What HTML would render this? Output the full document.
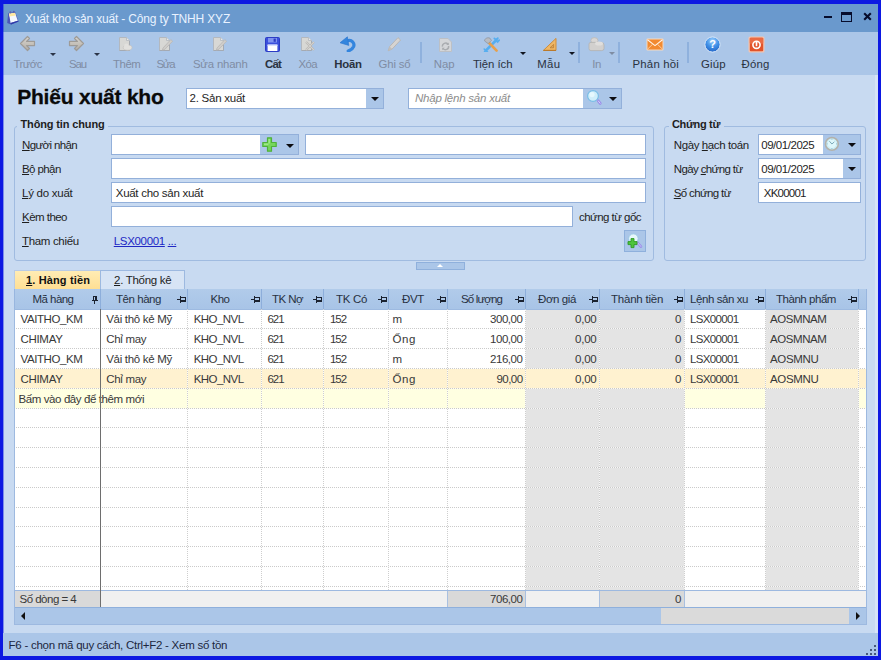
<!DOCTYPE html>
<html><head><meta charset="utf-8"><title>Xuất kho sản xuất</title>
<style>
*{box-sizing:border-box;margin:0;padding:0}
html,body{width:881px;height:660px;overflow:hidden;background:#0c18e2;font-family:"Liberation Sans",sans-serif;font-size:11px;color:#1e1e1e}
.a{position:absolute;white-space:nowrap}
.win{left:3px;top:4px;width:875px;height:652px;background:#c8daf1}
.title{left:3px;top:4px;width:875px;height:28px;background:#6a99cd}
.tb{left:3px;top:32px;width:875px;height:43px;background:#abc6e8}
.tl{font-size:11.5px;color:#7f8ca3;line-height:14px}
.tl.on{color:#2a3240}
.tl.b{font-weight:700;color:#2a3240}
.sep{width:2px;height:21px;top:42px;background:#8fb1dd}
.inp{background:#fff;border:1px solid #93b0da;height:21px}
.btnbg{background:#abc6e8}
.lbl{font-size:11px;line-height:13px;color:#1e1e1e}
u{text-decoration:underline;text-underline-offset:1px}
.gb{border:1px solid #a0bbe0;border-radius:3px}
.leg{font-weight:700;font-size:11px;line-height:13px;background:#c8daf1;padding:0 3px 0 3px;color:#1e1e1e}
.hd{top:290px;height:19px;background:#abc6e8;border-right:1px solid #8fb0dc;font-size:11px;line-height:18px;color:#1e1e1e;text-align:center}
.cell{height:20px;font-size:11px;line-height:19px;color:#1e1e1e;padding:0 5px;overflow:hidden}
.r{text-align:right}
.arr{width:0;height:0;border-left:4px solid transparent;border-right:4px solid transparent;border-top:4px solid #111}
</style></head><body>

<div class="a win"></div>
<div class="a title"></div>
<div class="a" style="left:25px;top:12px;font-size:12px;line-height:14px;color:#e9f2ff;letter-spacing:-0.17px">Xuất kho sản xuất - Công ty TNHH XYZ</div>
<div class="a tb"></div>
<div class="a" style="left:875px;top:75px;width:3px;height:558px;background:#d6e3f6"></div>
<div class="a" style="left:3px;top:4px;width:1px;height:652px;background:rgba(12,24,226,0.4)"></div>
<div class="a tl " style="left:-22.3px;width:100px;text-align:center;top:57px;font-size:11.4px;letter-spacing:-0.59px">Trước</div>
<div class="a tl " style="left:27.5px;width:100px;text-align:center;top:57px;font-size:11.4px;letter-spacing:-1.03px">Sau</div>
<div class="a tl " style="left:76.7px;width:100px;text-align:center;top:57px;font-size:11.4px;letter-spacing:-0.44px">Thêm</div>
<div class="a tl " style="left:115.4px;width:100px;text-align:center;top:57px;font-size:11.4px;letter-spacing:-1.23px">Sửa</div>
<div class="a tl " style="left:170.3px;width:100px;text-align:center;top:57px;font-size:11.4px;letter-spacing:-0.19px">Sửa nhanh</div>
<div class="a tl b" style="left:223.0px;width:100px;text-align:center;top:57px;font-size:11.4px;letter-spacing:-0.79px">Cất</div>
<div class="a tl " style="left:257.8px;width:100px;text-align:center;top:57px;font-size:11.4px;letter-spacing:-0.50px">Xóa</div>
<div class="a tl b" style="left:298.0px;width:100px;text-align:center;top:57px;font-size:11.4px;letter-spacing:-0.22px">Hoãn</div>
<div class="a tl " style="left:344.5px;width:100px;text-align:center;top:57px;font-size:11.4px;letter-spacing:-0.19px">Ghi sổ</div>
<div class="a tl " style="left:394.2px;width:100px;text-align:center;top:57px;font-size:11.4px;letter-spacing:-0.04px">Nạp</div>
<div class="a tl on" style="left:442.7px;width:100px;text-align:center;top:57px;font-size:11.4px;letter-spacing:-0.07px">Tiện ích</div>
<div class="a tl on" style="left:498.8px;width:100px;text-align:center;top:57px;font-size:11.4px;letter-spacing:0.24px">Mẫu</div>
<div class="a tl " style="left:546.7px;width:100px;text-align:center;top:57px;font-size:11.4px;letter-spacing:-0.21px">In</div>
<div class="a tl on" style="left:605.8px;width:100px;text-align:center;top:57px;font-size:11.4px;letter-spacing:0.19px">Phản hồi</div>
<div class="a tl on" style="left:663.4px;width:100px;text-align:center;top:57px;font-size:11.4px;letter-spacing:0.18px">Giúp</div>
<div class="a tl on" style="left:705.6px;width:100px;text-align:center;top:57px;font-size:11.4px;letter-spacing:0.19px">Đóng</div>
<div class="a sep" style="left:420px"></div>
<div class="a sep" style="left:578px"></div>
<div class="a sep" style="left:618px"></div>
<div class="a sep" style="left:687px"></div>
<div class="a" style="left:17.2px;top:84px;font-size:21px;font-weight:700;line-height:26px;color:#0a0a0a;letter-spacing:-0.21px;-webkit-text-stroke:0.3px #0a0a0a">Phiếu xuất kho</div>
<div class="a inp" style="left:186px;top:88px;width:198px;height:21px"></div>
<div class="a btnbg" style="left:366px;top:89px;width:17px;height:19px"></div>
<svg class="a" style="left:370.5px;top:97px" width="8" height="4" viewBox="0 0 8 4"><path d="M0 0H8L4 4Z" fill="#0c0c10"/></svg>
<div class="a lbl" style="left:189.5px;top:92px;font-size:11.5px;letter-spacing:-0.24px;">2. Sản xuất</div>
<div class="a inp" style="left:408px;top:88px;width:214px;height:21px"></div>
<div class="a btnbg" style="left:583px;top:89px;width:38px;height:19px"></div>
<svg class="a" style="left:608.5px;top:97px" width="8" height="4" viewBox="0 0 8 4"><path d="M0 0H8L4 4Z" fill="#0c0c10"/></svg>
<div class="a lbl" style="left:415px;top:92px;font-size:11.5px;letter-spacing:-0.23px;font-style:italic;color:#8c8c8c;">Nhập lệnh sản xuất</div>
<div class="a gb" style="left:14px;top:126px;width:640px;height:135px"></div>
<div class="a" style="left:17px;top:118px;width:91px;height:14px;background:#c8daf1"></div>
<div class="a lbl" style="left:20.5px;top:118px;font-size:11px;letter-spacing:-0.14px;font-weight:700;">Thông tin chung</div>
<div class="a lbl" style="left:22px;top:139px;font-size:11.5px;letter-spacing:-0.63px;"><u>N</u>gười nhận</div>
<div class="a lbl" style="left:22px;top:163px;font-size:11.5px;letter-spacing:-0.59px;"><u>B</u>ộ phận</div>
<div class="a lbl" style="left:22px;top:187px;font-size:11.5px;letter-spacing:-0.26px;"><u>L</u>ý do xuất</div>
<div class="a lbl" style="left:22px;top:211px;font-size:11.5px;letter-spacing:-0.53px;"><u>K</u>èm theo</div>
<div class="a lbl" style="left:22px;top:235px;font-size:11.5px;letter-spacing:-0.33px;"><u>T</u>ham chiếu</div>
<div class="a inp" style="left:111px;top:134px;width:188px;height:21px"></div>
<div class="a btnbg" style="left:260px;top:135px;width:38px;height:19px"></div>
<svg class="a" style="left:286px;top:143.5px" width="8" height="4" viewBox="0 0 8 4"><path d="M0 0H8L4 4Z" fill="#0c0c10"/></svg>
<div class="a inp" style="left:305px;top:134px;width:341px;height:21px"></div>
<div class="a inp" style="left:111px;top:158px;width:535px;height:21px"></div>
<div class="a inp" style="left:111px;top:182px;width:535px;height:21px"></div>
<div class="a lbl" style="left:115.75px;top:187px;font-size:11.5px;letter-spacing:-0.28px;">Xuất cho sản xuất</div>
<div class="a inp" style="left:111px;top:206px;width:462px;height:21px"></div>
<div class="a lbl" style="left:579px;top:211px;font-size:11.5px;letter-spacing:-0.54px;">chứng từ gốc</div>
<div class="a lbl" style="left:113.75px;top:235px;font-size:11.5px;letter-spacing:-0.33px;color:#2027c4;"><u>LSX00001</u> <u>...</u></div>
<div class="a btnbg" style="left:624px;top:230px;width:22px;height:22px;border:1px solid #8fb0dc"></div>
<div class="a gb" style="left:664px;top:126px;width:202px;height:135px"></div>
<div class="a" style="left:669px;top:118px;width:55px;height:14px;background:#c8daf1"></div>
<div class="a lbl" style="left:672px;top:118px;font-size:11px;letter-spacing:-0.34px;font-weight:700;">Chứng từ</div>
<div class="a lbl" style="left:673.75px;top:139px;font-size:11.5px;letter-spacing:-0.40px;">Ngày <u>h</u>ạch toán</div>
<div class="a lbl" style="left:673.75px;top:163px;font-size:11.5px;letter-spacing:-0.62px;">Ngày <u>c</u>hứng từ</div>
<div class="a lbl" style="left:673.75px;top:187px;font-size:11.5px;letter-spacing:-0.64px;"><u>S</u>ố chứng từ</div>
<div class="a inp" style="left:758px;top:134px;width:103px;height:21px"></div>
<div class="a btnbg" style="left:823px;top:135px;width:37px;height:19px"></div>
<svg class="a" style="left:848px;top:143px" width="8" height="4" viewBox="0 0 8 4"><path d="M0 0H8L4 4Z" fill="#0c0c10"/></svg>
<div class="a lbl" style="left:761.25px;top:139px;font-size:11.5px;letter-spacing:-0.46px;">09/01/2025</div>
<div class="a inp" style="left:758px;top:158px;width:103px;height:21px"></div>
<div class="a btnbg" style="left:843px;top:159px;width:17px;height:19px"></div>
<svg class="a" style="left:848px;top:167px" width="8" height="4" viewBox="0 0 8 4"><path d="M0 0H8L4 4Z" fill="#0c0c10"/></svg>
<div class="a lbl" style="left:761.25px;top:163px;font-size:11.5px;letter-spacing:-0.46px;">09/01/2025</div>
<div class="a inp" style="left:758px;top:182px;width:103px;height:21px"></div>
<div class="a lbl" style="left:763.75px;top:187px;font-size:11.5px;letter-spacing:-0.76px;">XK00001</div>
<div class="a" style="left:416px;top:262px;width:49px;height:8px;background:#abc6e8;border:1px solid #8fb0dc"></div>
<div class="a" style="left:437px;top:264px;width:0;height:0;border-left:3px solid transparent;border-right:3px solid transparent;border-bottom:3px solid #fff"></div>
<div class="a" style="left:14px;top:270px;width:87px;height:20px;background:linear-gradient(#ffecb4,#ffde92);border:1px solid #b9cbe6;border-bottom:none"></div>
<div class="a lbl" style="left:26px;top:274px;font-size:11px;letter-spacing:0.14px;font-weight:700;color:#111;"><u>1</u>. Hàng tiền</div>
<div class="a" style="left:100px;top:270px;width:85px;height:20px;background:#d7e4f5;border:1px solid #9db9e0;border-bottom:none"></div>
<div class="a lbl" style="left:114px;top:274px;font-size:11.5px;letter-spacing:-0.28px;"><u>2</u>. Thống kê</div>
<div class="a" style="left:14px;top:289px;width:853px;height:336px;background:#fff"></div>
<div class="a" style="left:525px;top:309px;width:75px;height:281px;background:#e4e4e4"></div>
<div class="a" style="left:599px;top:309px;width:86px;height:281px;background:#e4e4e4"></div>
<div class="a" style="left:765px;top:309px;width:94px;height:281px;background:#e4e4e4"></div>
<div class="a" style="left:14px;top:369px;width:853px;height:20px;background:#fff2d0"></div>
<div class="a" style="left:14px;top:389px;width:853px;height:20px;background:#ffffe1"></div>
<div class="a" style="left:525px;top:389px;width:75px;height:20px;background:#e4e4e4"></div>
<div class="a" style="left:599px;top:389px;width:86px;height:20px;background:#e4e4e4"></div>
<div class="a" style="left:765px;top:389px;width:94px;height:20px;background:#e4e4e4"></div>
<div class="a" style="left:14px;top:289px;width:853px;height:21px;background:linear-gradient(#b1cbea,#a8c4e7);border-bottom:1px solid #9dbae1"></div>
<div class="a" style="left:100px;top:289px;width:1px;height:20px;background:#8daedb"></div>
<div class="a" style="left:187px;top:289px;width:1px;height:20px;background:#8daedb"></div>
<div class="a" style="left:261px;top:289px;width:1px;height:20px;background:#8daedb"></div>
<div class="a" style="left:323px;top:289px;width:1px;height:20px;background:#8daedb"></div>
<div class="a" style="left:388px;top:289px;width:1px;height:20px;background:#8daedb"></div>
<div class="a" style="left:447px;top:289px;width:1px;height:20px;background:#8daedb"></div>
<div class="a" style="left:525px;top:289px;width:1px;height:20px;background:#8daedb"></div>
<div class="a" style="left:599px;top:289px;width:1px;height:20px;background:#8daedb"></div>
<div class="a" style="left:684px;top:289px;width:1px;height:20px;background:#8daedb"></div>
<div class="a" style="left:765px;top:289px;width:1px;height:20px;background:#8daedb"></div>
<div class="a" style="left:858px;top:289px;width:1px;height:20px;background:#8daedb"></div>
<div class="a" style="left:14px;top:289px;width:1px;height:20px;background:#98b6df"></div>
<div class="a" style="left:866px;top:289px;width:1px;height:20px;background:#98b6df"></div>
<div class="a lbl" style="left:32.5px;top:293px;font-size:11.5px;letter-spacing:-0.54px;color:#283142;">Mã hàng</div>
<div class="a lbl" style="left:116px;top:293px;font-size:11.5px;letter-spacing:-0.45px;color:#283142;">Tên hàng</div>
<div class="a lbl" style="left:210.5px;top:293px;font-size:11.5px;letter-spacing:-0.49px;color:#283142;">Kho</div>
<div class="a lbl" style="left:272px;top:293px;font-size:11.5px;letter-spacing:-0.55px;color:#283142;">TK Nợ</div>
<div class="a lbl" style="left:336px;top:293px;font-size:11.5px;letter-spacing:-0.32px;color:#283142;">TK Có</div>
<div class="a lbl" style="left:402px;top:293px;font-size:11.5px;letter-spacing:-0.33px;color:#283142;">ĐVT</div>
<div class="a lbl" style="left:461px;top:293px;font-size:11.5px;letter-spacing:-0.86px;color:#283142;">Số lượng</div>
<div class="a lbl" style="left:538px;top:293px;font-size:11.5px;letter-spacing:-0.40px;color:#283142;">Đơn giá</div>
<div class="a lbl" style="left:611px;top:293px;font-size:11.5px;letter-spacing:-0.23px;color:#283142;">Thành tiền</div>
<div class="a lbl" style="left:690px;top:293px;font-size:11.5px;letter-spacing:-0.42px;color:#283142;">Lệnh sản xu</div>
<div class="a lbl" style="left:776px;top:293px;font-size:11.5px;letter-spacing:-0.46px;color:#283142;">Thành phẩm</div>
<svg class="a" style="left:92px;top:296px" width="6" height="8" viewBox="0 0 6 8" shape-rendering="crispEdges"><rect x="1" y="0" width="4" height="1" fill="#1b2230"/><rect x="1" y="0" width="1" height="5" fill="#1b2230"/><rect x="3" y="0" width="2" height="5" fill="#1b2230"/><rect x="0" y="4" width="6" height="1" fill="#1b2230"/><rect x="2" y="5" width="1" height="3" fill="#1b2230"/></svg>
<svg class="a" style="left:177px;top:296px" width="9" height="7" viewBox="0 0 9 7" shape-rendering="crispEdges"><rect x="0" y="3" width="3" height="1" fill="#1b2230"/><rect x="3" y="0" width="1" height="7" fill="#1b2230"/><rect x="4" y="1" width="5" height="1" fill="#1b2230"/><rect x="4" y="4" width="5" height="2" fill="#1b2230"/><rect x="8" y="1" width="1" height="5" fill="#1b2230"/></svg>
<svg class="a" style="left:251px;top:296px" width="9" height="7" viewBox="0 0 9 7" shape-rendering="crispEdges"><rect x="0" y="3" width="3" height="1" fill="#1b2230"/><rect x="3" y="0" width="1" height="7" fill="#1b2230"/><rect x="4" y="1" width="5" height="1" fill="#1b2230"/><rect x="4" y="4" width="5" height="2" fill="#1b2230"/><rect x="8" y="1" width="1" height="5" fill="#1b2230"/></svg>
<svg class="a" style="left:313px;top:296px" width="9" height="7" viewBox="0 0 9 7" shape-rendering="crispEdges"><rect x="0" y="3" width="3" height="1" fill="#1b2230"/><rect x="3" y="0" width="1" height="7" fill="#1b2230"/><rect x="4" y="1" width="5" height="1" fill="#1b2230"/><rect x="4" y="4" width="5" height="2" fill="#1b2230"/><rect x="8" y="1" width="1" height="5" fill="#1b2230"/></svg>
<svg class="a" style="left:378px;top:296px" width="9" height="7" viewBox="0 0 9 7" shape-rendering="crispEdges"><rect x="0" y="3" width="3" height="1" fill="#1b2230"/><rect x="3" y="0" width="1" height="7" fill="#1b2230"/><rect x="4" y="1" width="5" height="1" fill="#1b2230"/><rect x="4" y="4" width="5" height="2" fill="#1b2230"/><rect x="8" y="1" width="1" height="5" fill="#1b2230"/></svg>
<svg class="a" style="left:437px;top:296px" width="9" height="7" viewBox="0 0 9 7" shape-rendering="crispEdges"><rect x="0" y="3" width="3" height="1" fill="#1b2230"/><rect x="3" y="0" width="1" height="7" fill="#1b2230"/><rect x="4" y="1" width="5" height="1" fill="#1b2230"/><rect x="4" y="4" width="5" height="2" fill="#1b2230"/><rect x="8" y="1" width="1" height="5" fill="#1b2230"/></svg>
<svg class="a" style="left:515px;top:296px" width="9" height="7" viewBox="0 0 9 7" shape-rendering="crispEdges"><rect x="0" y="3" width="3" height="1" fill="#1b2230"/><rect x="3" y="0" width="1" height="7" fill="#1b2230"/><rect x="4" y="1" width="5" height="1" fill="#1b2230"/><rect x="4" y="4" width="5" height="2" fill="#1b2230"/><rect x="8" y="1" width="1" height="5" fill="#1b2230"/></svg>
<svg class="a" style="left:589px;top:296px" width="9" height="7" viewBox="0 0 9 7" shape-rendering="crispEdges"><rect x="0" y="3" width="3" height="1" fill="#1b2230"/><rect x="3" y="0" width="1" height="7" fill="#1b2230"/><rect x="4" y="1" width="5" height="1" fill="#1b2230"/><rect x="4" y="4" width="5" height="2" fill="#1b2230"/><rect x="8" y="1" width="1" height="5" fill="#1b2230"/></svg>
<svg class="a" style="left:674px;top:296px" width="9" height="7" viewBox="0 0 9 7" shape-rendering="crispEdges"><rect x="0" y="3" width="3" height="1" fill="#1b2230"/><rect x="3" y="0" width="1" height="7" fill="#1b2230"/><rect x="4" y="1" width="5" height="1" fill="#1b2230"/><rect x="4" y="4" width="5" height="2" fill="#1b2230"/><rect x="8" y="1" width="1" height="5" fill="#1b2230"/></svg>
<svg class="a" style="left:755px;top:296px" width="9" height="7" viewBox="0 0 9 7" shape-rendering="crispEdges"><rect x="0" y="3" width="3" height="1" fill="#1b2230"/><rect x="3" y="0" width="1" height="7" fill="#1b2230"/><rect x="4" y="1" width="5" height="1" fill="#1b2230"/><rect x="4" y="4" width="5" height="2" fill="#1b2230"/><rect x="8" y="1" width="1" height="5" fill="#1b2230"/></svg>
<svg class="a" style="left:848px;top:296px" width="9" height="7" viewBox="0 0 9 7" shape-rendering="crispEdges"><rect x="0" y="3" width="3" height="1" fill="#1b2230"/><rect x="3" y="0" width="1" height="7" fill="#1b2230"/><rect x="4" y="1" width="5" height="1" fill="#1b2230"/><rect x="4" y="4" width="5" height="2" fill="#1b2230"/><rect x="8" y="1" width="1" height="5" fill="#1b2230"/></svg>
<div class="a" style="left:14px;top:328px;width:853px;height:1px;background:repeating-linear-gradient(90deg,#cacaca 0 1px,rgba(255,255,255,.75) 1px 2px)"></div>
<div class="a" style="left:14px;top:348px;width:853px;height:1px;background:repeating-linear-gradient(90deg,#cacaca 0 1px,rgba(255,255,255,.75) 1px 2px)"></div>
<div class="a" style="left:14px;top:368px;width:853px;height:1px;background:repeating-linear-gradient(90deg,#cacaca 0 1px,rgba(255,255,255,.75) 1px 2px)"></div>
<div class="a" style="left:14px;top:388px;width:853px;height:1px;background:repeating-linear-gradient(90deg,#cacaca 0 1px,rgba(255,255,255,.75) 1px 2px)"></div>
<div class="a" style="left:14px;top:408px;width:853px;height:1px;background:repeating-linear-gradient(90deg,#cacaca 0 1px,rgba(255,255,255,.75) 1px 2px)"></div>
<div class="a" style="left:14px;top:427px;width:853px;height:1px;background:repeating-linear-gradient(90deg,#cacaca 0 1px,rgba(255,255,255,.75) 1px 2px)"></div>
<div class="a" style="left:14px;top:447px;width:853px;height:1px;background:repeating-linear-gradient(90deg,#cacaca 0 1px,rgba(255,255,255,.75) 1px 2px)"></div>
<div class="a" style="left:14px;top:467px;width:853px;height:1px;background:repeating-linear-gradient(90deg,#cacaca 0 1px,rgba(255,255,255,.75) 1px 2px)"></div>
<div class="a" style="left:14px;top:487px;width:853px;height:1px;background:repeating-linear-gradient(90deg,#cacaca 0 1px,rgba(255,255,255,.75) 1px 2px)"></div>
<div class="a" style="left:14px;top:507px;width:853px;height:1px;background:repeating-linear-gradient(90deg,#cacaca 0 1px,rgba(255,255,255,.75) 1px 2px)"></div>
<div class="a" style="left:14px;top:526px;width:853px;height:1px;background:repeating-linear-gradient(90deg,#cacaca 0 1px,rgba(255,255,255,.75) 1px 2px)"></div>
<div class="a" style="left:14px;top:546px;width:853px;height:1px;background:repeating-linear-gradient(90deg,#cacaca 0 1px,rgba(255,255,255,.75) 1px 2px)"></div>
<div class="a" style="left:14px;top:566px;width:853px;height:1px;background:repeating-linear-gradient(90deg,#cacaca 0 1px,rgba(255,255,255,.75) 1px 2px)"></div>
<div class="a" style="left:14px;top:586px;width:853px;height:1px;background:repeating-linear-gradient(90deg,#cacaca 0 1px,rgba(255,255,255,.75) 1px 2px)"></div>
<div class="a" style="left:187px;top:309px;width:1px;height:281px;background:repeating-linear-gradient(180deg,#cecece 0 1px,rgba(255,255,255,.75) 1px 2px)"></div>
<div class="a" style="left:261px;top:309px;width:1px;height:281px;background:repeating-linear-gradient(180deg,#cecece 0 1px,rgba(255,255,255,.75) 1px 2px)"></div>
<div class="a" style="left:323px;top:309px;width:1px;height:281px;background:repeating-linear-gradient(180deg,#cecece 0 1px,rgba(255,255,255,.75) 1px 2px)"></div>
<div class="a" style="left:388px;top:309px;width:1px;height:281px;background:repeating-linear-gradient(180deg,#cecece 0 1px,rgba(255,255,255,.75) 1px 2px)"></div>
<div class="a" style="left:447px;top:309px;width:1px;height:281px;background:repeating-linear-gradient(180deg,#cecece 0 1px,rgba(255,255,255,.75) 1px 2px)"></div>
<div class="a" style="left:525px;top:309px;width:1px;height:281px;background:repeating-linear-gradient(180deg,#cecece 0 1px,rgba(255,255,255,.75) 1px 2px)"></div>
<div class="a" style="left:599px;top:309px;width:1px;height:281px;background:repeating-linear-gradient(180deg,#cecece 0 1px,rgba(255,255,255,.75) 1px 2px)"></div>
<div class="a" style="left:684px;top:309px;width:1px;height:281px;background:repeating-linear-gradient(180deg,#cecece 0 1px,rgba(255,255,255,.75) 1px 2px)"></div>
<div class="a" style="left:765px;top:309px;width:1px;height:281px;background:repeating-linear-gradient(180deg,#cecece 0 1px,rgba(255,255,255,.75) 1px 2px)"></div>
<div class="a" style="left:858px;top:309px;width:1px;height:281px;background:repeating-linear-gradient(180deg,#cecece 0 1px,rgba(255,255,255,.75) 1px 2px)"></div>
<div class="a lbl" style="left:20.5px;top:313px;font-size:11.5px;letter-spacing:-0.40px;color:#383838;">VAITHO_KM</div>
<div class="a lbl" style="left:106.25px;top:313px;font-size:11.5px;letter-spacing:-0.30px;color:#383838;">Vải thô kẻ Mỹ</div>
<div class="a lbl" style="left:193.75px;top:313px;font-size:11.5px;letter-spacing:-0.56px;color:#383838;">KHO_NVL</div>
<div class="a lbl" style="left:267.5px;top:313px;font-size:11.5px;letter-spacing:-1.06px;color:#383838;">621</div>
<div class="a lbl" style="left:330px;top:313px;font-size:11.5px;letter-spacing:-1.06px;color:#383838;">152</div>
<div class="a lbl" style="left:392.5px;top:313px;font-size:11.5px;letter-spacing:-1.58px;color:#383838;">m</div>
<div class="a lbl" style="left:490px;top:313px;font-size:11.5px;letter-spacing:-0.45px;color:#383838;">300,00</div>
<div class="a lbl" style="left:575px;top:313px;font-size:11.5px;letter-spacing:-0.22px;color:#383838;">0,00</div>
<div class="a lbl" style="left:675px;top:313px;font-size:11.5px;letter-spacing:-0.40px;color:#383838;">0</div>
<div class="a lbl" style="left:690px;top:313px;font-size:11.5px;letter-spacing:-0.65px;color:#383838;">LSX00001</div>
<div class="a lbl" style="left:770px;top:313px;font-size:11.5px;letter-spacing:-0.42px;color:#383838;">AOSMNAM</div>
<div class="a lbl" style="left:20.5px;top:333px;font-size:11.5px;letter-spacing:-0.31px;color:#383838;">CHIMAY</div>
<div class="a lbl" style="left:106.25px;top:333px;font-size:11.5px;letter-spacing:-0.31px;color:#383838;">Chỉ may</div>
<div class="a lbl" style="left:193.75px;top:333px;font-size:11.5px;letter-spacing:-0.56px;color:#383838;">KHO_NVL</div>
<div class="a lbl" style="left:267.5px;top:333px;font-size:11.5px;letter-spacing:-1.06px;color:#383838;">621</div>
<div class="a lbl" style="left:330px;top:333px;font-size:11.5px;letter-spacing:-1.06px;color:#383838;">152</div>
<div class="a lbl" style="left:392.5px;top:333px;font-size:11.5px;letter-spacing:0.59px;color:#383838;">Ống</div>
<div class="a lbl" style="left:490px;top:333px;font-size:11.5px;letter-spacing:-0.45px;color:#383838;">100,00</div>
<div class="a lbl" style="left:575px;top:333px;font-size:11.5px;letter-spacing:-0.22px;color:#383838;">0,00</div>
<div class="a lbl" style="left:675px;top:333px;font-size:11.5px;letter-spacing:-0.40px;color:#383838;">0</div>
<div class="a lbl" style="left:690px;top:333px;font-size:11.5px;letter-spacing:-0.65px;color:#383838;">LSX00001</div>
<div class="a lbl" style="left:770px;top:333px;font-size:11.5px;letter-spacing:-0.42px;color:#383838;">AOSMNAM</div>
<div class="a lbl" style="left:20.5px;top:353px;font-size:11.5px;letter-spacing:-0.40px;color:#383838;">VAITHO_KM</div>
<div class="a lbl" style="left:106.25px;top:353px;font-size:11.5px;letter-spacing:-0.30px;color:#383838;">Vải thô kẻ Mỹ</div>
<div class="a lbl" style="left:193.75px;top:353px;font-size:11.5px;letter-spacing:-0.56px;color:#383838;">KHO_NVL</div>
<div class="a lbl" style="left:267.5px;top:353px;font-size:11.5px;letter-spacing:-1.06px;color:#383838;">621</div>
<div class="a lbl" style="left:330px;top:353px;font-size:11.5px;letter-spacing:-1.06px;color:#383838;">152</div>
<div class="a lbl" style="left:392.5px;top:353px;font-size:11.5px;letter-spacing:-1.58px;color:#383838;">m</div>
<div class="a lbl" style="left:490px;top:353px;font-size:11.5px;letter-spacing:-0.45px;color:#383838;">216,00</div>
<div class="a lbl" style="left:575px;top:353px;font-size:11.5px;letter-spacing:-0.22px;color:#383838;">0,00</div>
<div class="a lbl" style="left:675px;top:353px;font-size:11.5px;letter-spacing:-0.40px;color:#383838;">0</div>
<div class="a lbl" style="left:690px;top:353px;font-size:11.5px;letter-spacing:-0.65px;color:#383838;">LSX00001</div>
<div class="a lbl" style="left:770px;top:353px;font-size:11.5px;letter-spacing:-0.33px;color:#383838;">AOSMNU</div>
<div class="a lbl" style="left:20.5px;top:373px;font-size:11.5px;letter-spacing:-0.31px;color:#383838;">CHIMAY</div>
<div class="a lbl" style="left:106.25px;top:373px;font-size:11.5px;letter-spacing:-0.31px;color:#383838;">Chỉ may</div>
<div class="a lbl" style="left:193.75px;top:373px;font-size:11.5px;letter-spacing:-0.56px;color:#383838;">KHO_NVL</div>
<div class="a lbl" style="left:267.5px;top:373px;font-size:11.5px;letter-spacing:-1.06px;color:#383838;">621</div>
<div class="a lbl" style="left:330px;top:373px;font-size:11.5px;letter-spacing:-1.06px;color:#383838;">152</div>
<div class="a lbl" style="left:392.5px;top:373px;font-size:11.5px;letter-spacing:0.59px;color:#383838;">Ống</div>
<div class="a lbl" style="left:496.5px;top:373px;font-size:11.5px;letter-spacing:-0.56px;color:#383838;">90,00</div>
<div class="a lbl" style="left:575px;top:373px;font-size:11.5px;letter-spacing:-0.22px;color:#383838;">0,00</div>
<div class="a lbl" style="left:675px;top:373px;font-size:11.5px;letter-spacing:-0.40px;color:#383838;">0</div>
<div class="a lbl" style="left:690px;top:373px;font-size:11.5px;letter-spacing:-0.65px;color:#383838;">LSX00001</div>
<div class="a lbl" style="left:770px;top:373px;font-size:11.5px;letter-spacing:-0.33px;color:#383838;">AOSMNU</div>
<div class="a lbl" style="left:18.5px;top:393px;font-size:11.5px;letter-spacing:-0.40px;color:#383838;">Bấm vào đây để thêm mới</div>
<div class="a" style="left:14px;top:590px;width:853px;height:17px;background:#f0f0f0;border-top:1px solid #9db9e0"></div>
<div class="a" style="left:14px;top:591px;width:86px;height:16px;background:#d9d9d9"></div>
<div class="a" style="left:448px;top:591px;width:77px;height:16px;background:#d9d9d9"></div>
<div class="a" style="left:600px;top:591px;width:84px;height:16px;background:#d9d9d9"></div>
<div class="a" style="left:447px;top:591px;width:1px;height:16px;background:#a9c0e0"></div>
<div class="a" style="left:525px;top:591px;width:1px;height:16px;background:#a9c0e0"></div>
<div class="a" style="left:599px;top:591px;width:1px;height:16px;background:#a9c0e0"></div>
<div class="a" style="left:684px;top:591px;width:1px;height:16px;background:#a9c0e0"></div>
<div class="a lbl" style="left:19.5px;top:593px;font-size:11.5px;letter-spacing:-0.51px;color:#383838;">Số dòng = 4</div>
<div class="a lbl" style="left:490px;top:593px;font-size:11.5px;letter-spacing:-0.45px;color:#383838;">706,00</div>
<div class="a lbl" style="left:675px;top:593px;font-size:11.5px;letter-spacing:-0.40px;color:#383838;">0</div>
<div class="a" style="left:100px;top:309px;width:1px;height:298px;background:#6e6e6e"></div>
<div class="a" style="left:14px;top:607px;width:853px;height:18px;background:#abc6e8;border-top:1px solid #8fb0dc;border-bottom:1px solid #8fb0dc"></div>
<div class="a" style="left:661px;top:608px;width:188px;height:16px;background:#dadada"></div>
<div class="a" style="left:21px;top:612px;width:0;height:0;border-top:4px solid transparent;border-bottom:4px solid transparent;border-right:4px solid #111"></div>
<div class="a" style="left:856px;top:612px;width:0;height:0;border-top:4px solid transparent;border-bottom:4px solid transparent;border-left:4px solid #111"></div>
<div class="a" style="left:3px;top:633px;width:875px;height:23px;background:#abc6e8"></div>
<div class="a lbl" style="left:8.6px;top:639px;font-size:11.5px;letter-spacing:-0.26px;color:#1c2740;">F6 - chọn mã quy cách, Ctrl+F2 - Xem số tồn</div>
<div class="a" style="left:14px;top:309px;width:853px;height:316px;border:1px solid #9db9e0;border-top:none;pointer-events:none"></div>
<svg class="a" style="left:6px;top:9.5px" width="14" height="16" viewBox="0 0 14 16" ><path d="M2.2 3.2 L9.2 2 L12.6 11.6 L5 14.4 L1.2 13 Z" fill="#4a55b8"/><path d="M3 3.6 L9 2.8 L11.8 10.8 L4.6 13 Z" fill="#f4f8ff"/><path d="M3 3.6 L9 2.8 L9.8 5.4 L3.4 6.4 Z" fill="#ffe9a0"/><circle cx="4.4" cy="2.4" r="1.1" fill="#5a64b0"/><circle cx="7.8" cy="1.9" r="1.1" fill="#5a64b0"/><path d="M4.6 13 L11.8 10.8 L12.6 11.6 L5 14.4Z" fill="#2f3aa8"/></svg>
<div class="a" style="left:824px;top:16px;width:8px;height:2px;background:#060c2c"></div>
<div class="a" style="left:841px;top:12px;width:11px;height:10px;border:1px solid #060c2c;border-top-width:3px"></div>
<svg class="a" style="left:863px;top:12px" width="9" height="9" viewBox="0 0 9 9" ><path d="M1.2 1.2 L7.8 7.8 M7.8 1.2 L1.2 7.8" stroke="#060c2c" stroke-width="2.1" fill="none"/></svg>
<svg class="a" style="left:19px;top:35px" width="17" height="17" viewBox="0 0 17 17" ><defs><linearGradient id="ga" x1="0" y1="0" x2="0" y2="1"><stop offset="0" stop-color="#d9d6d0"/><stop offset="1" stop-color="#b3aea6"/></linearGradient></defs><path d="M8.5 1.5 L1.5 8.5 L8.5 15.5 L10.5 13.5 L7.6 10.6 L15.5 10.6 L15.5 6.4 L7.6 6.4 L10.5 3.5 Z" fill="url(#ga)" stroke="#9e9b97" stroke-width="1.2" stroke-linejoin="round"/></svg>
<svg class="a" style="left:68px;top:35px" width="17" height="17" viewBox="0 0 17 17" ><path d="M8.5 1.5 L15.5 8.5 L8.5 15.5 L6.5 13.5 L9.4 10.6 L1.5 10.6 L1.5 6.4 L9.4 6.4 L6.5 3.5 Z" fill="url(#ga)" stroke="#9e9b97" stroke-width="1.2" stroke-linejoin="round"/></svg>
<svg class="a" style="left:50px;top:53px" width="6" height="3" viewBox="0 0 6 3" ><path d="M0 0 H6 L3 3Z" fill="#2b3448"/></svg>
<svg class="a" style="left:94px;top:53px" width="6" height="3" viewBox="0 0 6 3" ><path d="M0 0 H6 L3 3Z" fill="#2b3448"/></svg>
<svg class="a" style="left:520px;top:52px" width="6" height="3" viewBox="0 0 6 3" ><path d="M0 0 H6 L3 3Z" fill="#10151f"/></svg>
<svg class="a" style="left:569px;top:52px" width="6" height="3" viewBox="0 0 6 3" ><path d="M0 0 H6 L3 3Z" fill="#10151f"/></svg>
<svg class="a" style="left:609px;top:52px" width="6" height="3" viewBox="0 0 6 3" ><path d="M0 0 H6 L3 3Z" fill="#7f8da3"/></svg>
<svg class="a" style="left:118px;top:37px" width="15" height="15" viewBox="0 0 15 15" ><path d="M1.5 0.5 H8.5 L11.5 3.5 V13.5 H1.5 Z" fill="#d8d8d5" stroke="#b3b8bf" stroke-width="1"/><path d="M1.5 13.5 H11.5 V4" fill="none" stroke="#a4aab3" stroke-width="1"/><path d="M8.5 0.5 V3.5 H11.5" fill="#e8e8e6" stroke="#b3b8bf" stroke-width="0.8"/><ellipse cx="9.6" cy="10.6" rx="4.4" ry="2.6" fill="#e2e1de" stroke="#c2c0bc" stroke-width="0.6"/><circle cx="8.4" cy="8.6" r="2.2" fill="#e2e1de"/></svg>
<svg class="a" style="left:158px;top:37px" width="16" height="15" viewBox="0 0 16 15" ><path d="M1.5 0.5 H8.5 L11.5 3.5 V13.5 H1.5 Z" fill="#d8d8d5" stroke="#b3b8bf" stroke-width="1"/><path d="M1.5 13.5 H11.5 V4" fill="none" stroke="#a4aab3" stroke-width="1"/><path d="M8.5 0.5 V3.5 H11.5" fill="#e8e8e6" stroke="#b3b8bf" stroke-width="0.8"/><path d="M5 11 L12.8 2.6 L14.6 4.2 L6.8 12.4 L4.4 13 Z" fill="#cfcdca" stroke="#b9b7b5" stroke-width="0.8"/></svg>
<svg class="a" style="left:212px;top:37px" width="16" height="15" viewBox="0 0 16 15" ><path d="M1.5 0.5 H8.5 L11.5 3.5 V13.5 H1.5 Z" fill="#d8d8d5" stroke="#b3b8bf" stroke-width="1"/><path d="M1.5 13.5 H11.5 V4" fill="none" stroke="#a4aab3" stroke-width="1"/><path d="M8.5 0.5 V3.5 H11.5" fill="#e8e8e6" stroke="#b3b8bf" stroke-width="0.8"/><path d="M5 11 L12.8 2.6 L14.6 4.2 L6.8 12.4 L4.4 13 Z" fill="#cfcdca" stroke="#b9b7b5" stroke-width="0.8"/></svg>
<svg class="a" style="left:265px;top:37px" width="15" height="15" viewBox="0 0 15 15" ><rect x="0.5" y="0.5" width="14" height="14" rx="1" fill="#3a4fdc" stroke="#2c3cc4"/><rect x="3" y="1" width="9" height="4.5" fill="#7f93f0"/><rect x="8.6" y="1.6" width="2.2" height="3.2" fill="#2c3cc4"/><rect x="2.6" y="7.6" width="9.8" height="6.4" fill="#ffffff"/><rect x="2.6" y="7.6" width="9.8" height="1.4" fill="#d8e0ff"/></svg>
<svg class="a" style="left:300px;top:37px" width="16" height="15" viewBox="0 0 16 15" ><path d="M1.5 0.5 H8.5 L11.5 3.5 V13.5 H1.5 Z" fill="#d8d8d5" stroke="#b3b8bf" stroke-width="1"/><path d="M1.5 13.5 H11.5 V4" fill="none" stroke="#a4aab3" stroke-width="1"/><path d="M8.5 0.5 V3.5 H11.5" fill="#e8e8e6" stroke="#b3b8bf" stroke-width="0.8"/><path d="M6 5 L14 13 M14 5 L6 13" stroke="#bdbbb8" stroke-width="2.2"/><path d="M6 5 L14 13 M14 5 L6 13" stroke="#d2d0cd" stroke-width="1"/></svg>
<svg class="a" style="left:339px;top:36px" width="17" height="16" viewBox="0 0 17 16" ><path d="M8.6 4.8 C12.6 3.4 16 7 14.6 10.6 C13.6 13 11.6 14.2 9.2 15" fill="none" stroke="#3385de" stroke-width="3.2" stroke-linecap="round"/><path d="M1 6.8 L8.4 0.8 L9.8 9.4 Z" fill="#3385de" stroke="#2a74cc" stroke-width="0.6" stroke-linejoin="round"/></svg>
<svg class="a" style="left:386px;top:36px" width="16" height="17" viewBox="0 0 16 17" ><path d="M2.2 14.8 L3.6 10.6 L12 1.6 L14.6 4 L6.2 13 Z" fill="#d6d4d2" stroke="#b5b3b1" stroke-width="0.9" stroke-linejoin="round"/><path d="M2.2 14.8 L3.6 10.6 L6.2 13 Z" fill="#bfbdbb"/></svg>
<svg class="a" style="left:438px;top:38px" width="15" height="14" viewBox="0 0 15 14" ><path d="M1.5 0.5 H10 L13.5 4 V13.5 H1.5 Z" fill="#d4d6d9" stroke="#bcc0c6"/><path d="M4.4 8.6 A3.2 3.2 0 0 1 10 6.2 M10.6 8 A3.2 3.2 0 0 1 5 10.6" stroke="#a9acb0" stroke-width="1.4" fill="none"/><path d="M10.8 4.4 V7 H8.2Z M4.2 12.2 V9.8 H6.8Z" fill="#a9acb0"/></svg>
<svg class="a" style="left:483px;top:36px" width="17" height="16" viewBox="0 0 17 16" ><path d="M3 14.4 L13.4 4" stroke="#55aef0" stroke-width="2.6" stroke-linecap="round"/><path d="M11.4 2.4 L13 4 L14.8 2.2 M12.8 4.2 L14.6 6 L16.2 4.2" stroke="#55aef0" stroke-width="1.8" fill="none" stroke-linecap="round"/><path d="M1.2 13 L2.8 14.6 L1.6 15.6 M3.2 14.8 L4.6 16" stroke="#55aef0" stroke-width="1.6" fill="none" stroke-linecap="round"/><path d="M13.6 14.6 L6.2 7" stroke="#e6a04c" stroke-width="2.6" stroke-linecap="round"/><path d="M1.6 5 C1.4 2.6 4.4 1 7 2.2 L8.4 4.4 L5.2 7.6 Z" fill="#b9bcc2" stroke="#8b9099" stroke-width="0.7" stroke-linejoin="round"/></svg>
<svg class="a" style="left:542px;top:37px" width="17" height="15" viewBox="0 0 17 15" ><path d="M14 1.4 L14 13.4 L1.4 13.4 Z" fill="#efb765" stroke="#cf8d3a" stroke-width="1" stroke-linejoin="round"/><path d="M11.6 7.4 L11.6 10.8 L8 10.8 Z" fill="#d9a560" stroke="#b77a2c" stroke-width="0.7"/><path d="M1.4 13.4 H14" stroke="#b8782a" stroke-width="1"/></svg>
<svg class="a" style="left:588px;top:37px" width="17" height="15" viewBox="0 0 17 15" ><ellipse cx="6.4" cy="3.6" rx="3.6" ry="3" fill="#d9d7d5" stroke="#bab8b6" stroke-width="0.8"/><path d="M1 7 Q1 5.4 3 5.4 H13.6 Q16 5.4 16 8 V11.6 Q16 13.6 13.6 13.6 H3 Q1 13.6 1 11.6 Z" fill="#d2d0ce" stroke="#b4b2b0" stroke-width="0.8"/><ellipse cx="11" cy="6.6" rx="4" ry="2" fill="#e0dedc"/></svg>
<svg class="a" style="left:646px;top:38px" width="18" height="13" viewBox="0 0 18 13" ><rect x="0.5" y="0.5" width="17" height="12" rx="1" fill="#f7d9bd"/><rect x="1.5" y="1.5" width="15" height="10" fill="#f28a30"/><path d="M1.5 1.8 L9 7.6 L16.5 1.8" stroke="#fff3e6" stroke-width="1.1" fill="none"/><path d="M1.5 11.2 L6.6 6.2 M16.5 11.2 L11.4 6.2" stroke="#fbd2ae" stroke-width="0.9"/></svg>
<svg class="a" style="left:704px;top:36px" width="17" height="17" viewBox="0 0 17 17" ><defs><radialGradient id="gq" cx="50%" cy="25%" r="75%"><stop offset="0" stop-color="#9fd2ff"/><stop offset="0.55" stop-color="#3f8fe6"/><stop offset="1" stop-color="#2667c8"/></radialGradient></defs><circle cx="8.5" cy="8.5" r="7.6" fill="url(#gq)" stroke="#d7e6f8" stroke-width="1"/><text x="8.5" y="12.4" text-anchor="middle" font-family="Liberation Sans" font-weight="700" font-size="11" fill="#fff">?</text></svg>
<svg class="a" style="left:748px;top:36px" width="17" height="17" viewBox="0 0 17 17" ><rect x="0.5" y="0.5" width="16" height="16" rx="1.5" fill="#f3c3ae"/><rect x="1.8" y="1.8" width="13.4" height="13.4" rx="1" fill="#e2532a"/><rect x="1.8" y="1.8" width="13.4" height="6" rx="1" fill="#ea6b44"/><circle cx="8.5" cy="8.8" r="3.6" fill="none" stroke="#fff" stroke-width="1.6"/><rect x="7.7" y="5.8" width="1.6" height="4.4" fill="#fff"/></svg>
<svg class="a" style="left:262px;top:137px" width="15" height="15" viewBox="0 0 15 15" ><path d="M5.5 0.8 H9.5 V5.5 H14.2 V9.5 H9.5 V14.2 H5.5 V9.5 H0.8 V5.5 H5.5 Z" fill="#76d65a" stroke="#4fb13a" stroke-width="1.2" stroke-linejoin="round"/><path d="M6.4 2 H8 V6.4 H6.4Z M2 6.4 H6.4 V8 H2Z" fill="#a8ec92" opacity="0.8"/></svg>
<svg class="a" style="left:586px;top:89px" width="18" height="18" viewBox="0 0 18 18" ><circle cx="7" cy="7" r="5.4" fill="#cfeefa" stroke="#79bde6" stroke-width="1.2"/><circle cx="6" cy="5.6" r="2.6" fill="#eafaff" opacity="0.8"/><path d="M12.2 11.8 L14.2 14.4" stroke="#9a8fe8" stroke-width="2.8" stroke-linecap="round"/><path d="M12.3 12 L14.1 14.2" stroke="#d5cffa" stroke-width="1" stroke-linecap="round"/></svg>
<svg class="a" style="left:824px;top:136px" width="16" height="16" viewBox="0 0 16 16" ><circle cx="7.9" cy="7.9" r="6.4" fill="#cdeef6" stroke="#b3b1aa" stroke-width="1.6"/><circle cx="7.9" cy="7.9" r="4.2" fill="#dff7fb"/><path d="M7.9 8 L5.4 5.2 M7.9 8 L10.4 5.8" stroke="#6f9fb0" stroke-width="0.9"/><path d="M7.9 2.6v1M7.9 12.2v1M2.6 7.9h1M12.2 7.9h1" stroke="#7fb0c0" stroke-width="0.8"/></svg>
<svg class="a" style="left:626px;top:232px" width="18" height="18" viewBox="0 0 18 18" ><circle cx="7.4" cy="6.6" r="4.8" fill="#e6f7fb" stroke="#9cc8e6" stroke-width="1"/><path d="M11.4 10.6 L15 14.6" stroke="#9a8fe8" stroke-width="2.6" stroke-linecap="round"/><path d="M11.6 10.8 L14.8 14.4" stroke="#d5cffa" stroke-width="0.9" stroke-linecap="round"/><path d="M5 6.6 H8 V9.6 H11 V12.6 H8 V15.6 H5 V12.6 H2 V9.6 H5 Z" fill="#4ec43c" stroke="#2f9a24" stroke-width="0.9" stroke-linejoin="round"/></svg>
<svg class="a" style="left:866px;top:645px" width="10" height="10" viewBox="0 0 10 10" shape-rendering="crispEdges"><rect x="8" y="0" width="2" height="2" fill="#46587a"/><rect x="4" y="4" width="2" height="2" fill="#46587a"/><rect x="8" y="4" width="2" height="2" fill="#46587a"/><rect x="0" y="8" width="2" height="2" fill="#46587a"/><rect x="4" y="8" width="2" height="2" fill="#46587a"/><rect x="8" y="8" width="2" height="2" fill="#46587a"/></svg>
</body></html>
